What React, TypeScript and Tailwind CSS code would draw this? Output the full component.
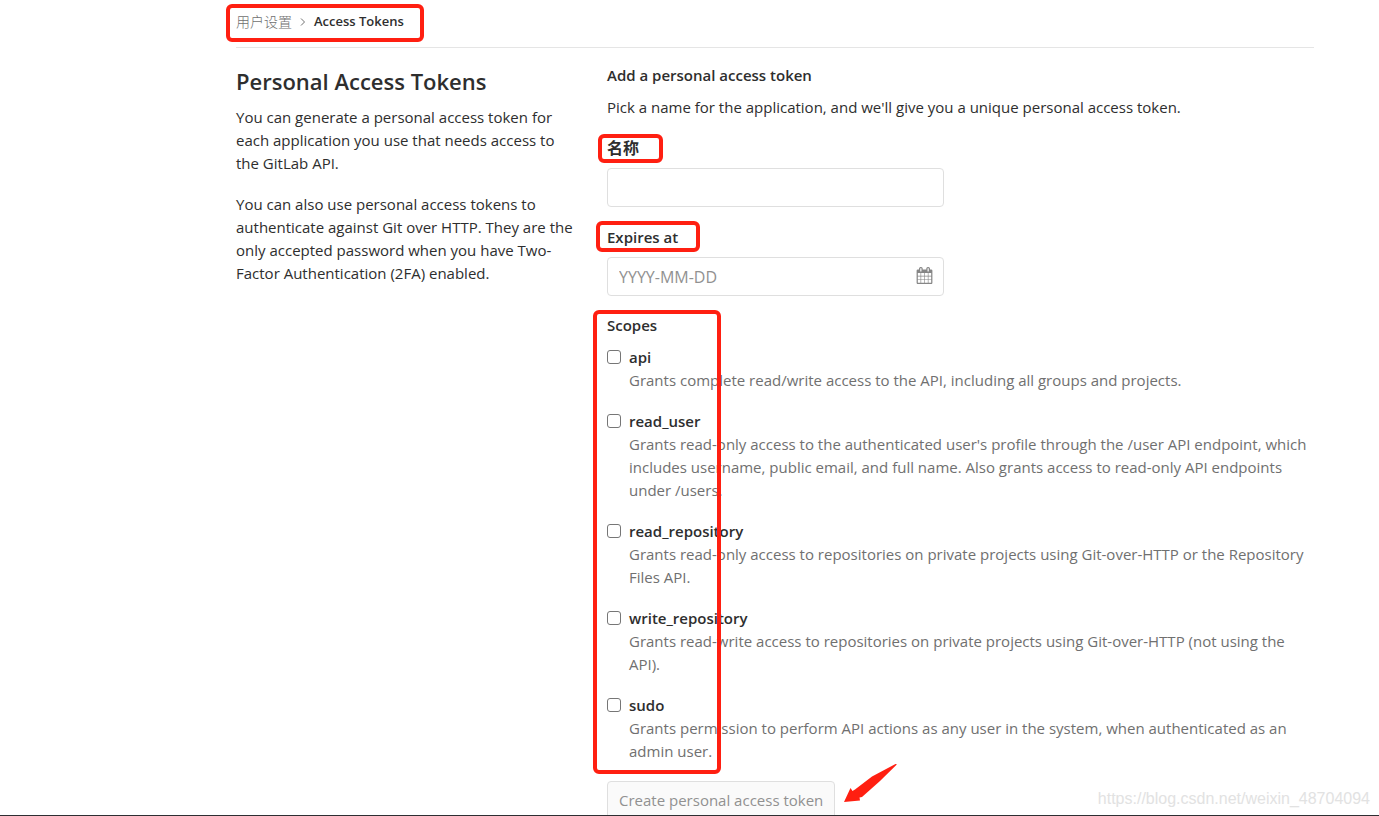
import { ReactNode } from 'react';
import clsx from 'clsx';

interface Scope {
  name: string;
  description: string;
}

const scopes: Scope[] = [
  {
    name: 'api',
    description: 'Grants complete read/write access to the API, including all groups and projects.',
  },
  {
    name: 'read_user',
    description:
      "Grants read-only access to the authenticated user's profile through the /user API endpoint, which includes username, public email, and full name. Also grants access to read-only API endpoints under /users.",
  },
  {
    name: 'read_repository',
    description:
      'Grants read-only access to repositories on private projects using Git-over-HTTP or the Repository Files API.',
  },
  {
    name: 'write_repository',
    description:
      'Grants read-write access to repositories on private projects using Git-over-HTTP (not using the API).',
  },
  {
    name: 'sudo',
    description:
      'Grants permission to perform API actions as any user in the system, when authenticated as an admin user.',
  },
];

// Red frame drawn over the block it is placed in
function Highlight({ className }: { className: string }) {
  return (
    <span
      aria-hidden="true"
      className={clsx('pointer-events-none absolute rounded-md border-4 border-[#ff1f11]', className)}
    />
  );
}

function CalendarIcon({ className }: { className?: string }) {
  return (
    <svg viewBox="0 0 1792 1792" fill="currentColor" className={className} aria-hidden="true">
      <path d="M192 1664h288v-288h-288v288zM544 1664h320v-288h-320v288zM192 1312h288v-320h-288v320zM544 1312h320v-320h-320v320zM192 928h288v-288h-288v288zM928 1664h320v-288h-320v288zM544 928h320v-288h-320v288zM1312 1664h288v-288h-288v288zM928 1312h320v-320h-320v320zM576 448v-288q0-13-9.5-22.5t-22.5-9.5h-64q-13 0-22.5 9.5t-9.5 22.5v288q0 13 9.5 22.5t22.5 9.5h64q13 0 22.5-9.5t9.5-22.5zM1312 1312h288v-320h-288v320zM928 928h320v-288h-320v288zM1312 928h288v-288h-288v288zM1344 448v-288q0-13-9.5-22.5t-22.5-9.5h-64q-13 0-22.5 9.5t-9.5 22.5v288q0 13 9.5 22.5t22.5 9.5h64q13 0 22.5-9.5t9.5-22.5zM1728 384v1280q0 52-38 90t-90 38h-1408q-52 0-90-38t-38-90v-1280q0-52 38-90t90-38h128v-96q0-66 47-113t113-47h64q66 0 113 47t47 113v96h384v-96q0-66 47-113t113-47h64q66 0 113 47t47 113v96h128q52 0 90 38t38 90z" />
    </svg>
  );
}

interface FieldProps {
  id: string;
  label: string;
  labelClass?: string;
  highlight: string;
  children: ReactNode;
}

function Field({ id, label, labelClass, highlight, children }: FieldProps) {
  return (
    <div>
      <label htmlFor={id} className={clsx('relative mb-2 block w-fit', labelClass)}>
        {label}
        <Highlight className={highlight} />
      </label>
      {children}
    </div>
  );
}

function ScopeOption({ scope }: { scope: Scope }) {
  const id = `scope_${scope.name}`;

  return (
    <div className="mb-[18px] flex gap-2">
      <input
        id={id}
        type="checkbox"
        className="mt-1 size-[14px] shrink-0 appearance-none rounded-[3px] border border-[#767676] bg-white checked:bg-blue-600"
      />
      <div>
        <label htmlFor={id} className="block w-fit font-semibold">
          {scope.name}
        </label>
        <p className="text-[#707070]">{scope.description}</p>
      </div>
    </div>
  );
}

export default function App() {
  const inputClass =
    'block h-[39px] w-full rounded border border-[#dfdfdf] bg-white px-[11px] text-base placeholder:text-[#919191] outline-none focus:border-blue-400';

  return (
    <div className="relative h-screen overflow-hidden border-b border-[#2e2e32] bg-white pr-[65px] pl-[236px] font-['Open_Sans','Noto_Sans_CJK_SC',sans-serif] text-[15px] leading-[23px] text-[#2e2e2e]">
      <header className="flex h-12 border-b border-[#e5e5e5] pt-[10px]">
        <nav className="relative flex h-[23px] items-center text-[13px]">
          <a href="#settings" className="text-sm font-light text-[#707070]">
            用户设置
          </a>
          <svg viewBox="0 0 8 8" className="mx-[7px] size-2" fill="none" stroke="#707070" aria-hidden="true">
            <path d="M2 0.5 5.5 4 2 7.5" />
          </svg>
          <a href="#tokens" className="font-semibold">
            Access Tokens
          </a>
          <Highlight className="-top-[6px] -right-5 -bottom-[9px] -left-[10px]" />
        </nav>
      </header>

      <main className="grid grid-cols-[341px_1fr] gap-[30px] pt-4">
        <section>
          <h1 className="mb-2 text-[22px] leading-[34px] font-semibold">Personal Access Tokens</h1>
          <p className="mb-[18px]">
            You can generate a personal access token for each application you use that needs access to the GitLab API.
          </p>
          <p>
            You can also use personal access tokens to authenticate against Git over HTTP. They are the only accepted
            password when you have Two-Factor Authentication (2FA) enabled.
          </p>
        </section>

        <form onSubmit={(e) => e.preventDefault()}>
          <h2 className="mb-[9px] font-semibold">Add a personal access token</h2>
          <p className="mb-[18px]">
            Pick a name for the application, and we'll give you a unique personal access token.
          </p>

          <div className="mb-[18px] flex w-[337px] flex-col gap-[19px]">
            <Field
              id="token_name"
              label="名称"
              labelClass="text-base leading-[23px] font-bold"
              highlight="-top-[3px] -right-6 -bottom-[3px] -left-[9px]"
            >
              <input id="token_name" type="text" className={inputClass} />
            </Field>

            <Field
              id="token_expires"
              label="Expires at"
              labelClass="font-semibold"
              highlight="-top-[5px] -right-[22px] -bottom-[3px] -left-[11px]"
            >
              <div className="relative">
                <input id="token_expires" type="text" placeholder="YYYY-MM-DD" className={inputClass} />
                <CalendarIcon className="absolute top-[10px] right-[11px] size-[17px] text-[#868686]" />
              </div>
            </Field>
          </div>

          <div className="relative">
            <fieldset>
              <legend className="mb-[9px] font-semibold">Scopes</legend>
              {scopes.map((scope) => (
                <ScopeOption key={scope.name} scope={scope} />
              ))}
            </fieldset>
            <Highlight className="-top-1 bottom-[7px] -left-[14px] w-32" />
          </div>

          <div className="flex items-start gap-[9px]">
            <button
              type="submit"
              disabled
              className="h-[38px] rounded border border-[#dfdfdf] bg-[#fafafa] px-[11px] text-[#919191]"
            >
              Create personal access token
            </button>
            <svg viewBox="0 0 54 40" className="-mt-[18px] h-10 w-[54px]" fill="#ff1f11" aria-hidden="true">
              <path d="M51.5 1C52.5 0.6 53 1.4 52.3 2.1L36 18 18 34 15.5 34.5 16 37.5 0 39 6.5 25 8.5 28 11 26.5 28 13.5Z" />
            </svg>
          </div>
        </form>
      </main>

      <span className="absolute right-[9px] bottom-1 font-['Liberation_Sans',sans-serif] text-base text-[#e2e2e2]">
        https://blog.csdn.net/weixin_48704094
      </span>
    </div>
  );
}
